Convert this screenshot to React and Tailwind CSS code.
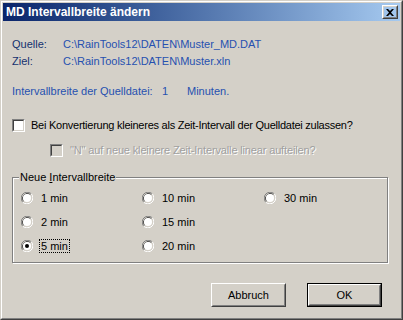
import React from "react";

function Checkbox({ disabled }) {
  return (
    <div className="w-[13px] h-[13px] shrink-0 border border-t-[#808080] border-l-[#808080] border-r-white border-b-white">
      <div className={"w-full h-full border border-t-[#404040] border-l-[#404040] border-r-[#d4d0c8] border-b-[#d4d0c8] " + (disabled ? "bg-[#d4d0c8]" : "bg-white")} />
    </div>
  );
}

function Radio({ checked }) {
  return (
    <svg width="12" height="12" viewBox="0 0 12 12" className="shrink-0">
      <path d="M10.24 1.76 A6 6 0 0 0 1.76 10.24" fill="none" stroke="#808080" strokeWidth="1" />
      <path d="M1.76 10.24 A6 6 0 0 0 10.24 1.76" fill="none" stroke="#ffffff" strokeWidth="1" />
      <path d="M9.5 2.5 A5 5 0 0 0 2.5 9.5" fill="none" stroke="#404040" strokeWidth="1" />
      <path d="M2.5 9.5 A5 5 0 0 0 9.5 2.5" fill="none" stroke="#d4d0c8" strokeWidth="1" />
      <circle cx="6" cy="6" r="4" fill="#ffffff" />
      {checked && <circle cx="6" cy="6" r="2" fill="#000000" />}
    </svg>
  );
}

function RadioItem({ label, checked, focus }) {
  return (
    <div className="h-[16px] flex items-center gap-[6px]">
      <Radio checked={checked} />
      {focus ? (
        <span className="border border-dotted border-black px-px leading-[12px]">{label}</span>
      ) : (
        <span className="leading-[13px] pl-[2px]">{label}</span>
      )}
    </div>
  );
}

function Button({ children, isDefault }) {
  const inner = (
    <div className="w-full h-full border border-t-white border-l-white border-r-[#404040] border-b-[#404040]">
      <div className="w-full h-full border border-t-[#d4d0c8] border-l-[#d4d0c8] border-r-[#808080] border-b-[#808080] flex items-center justify-center">
        {children}
      </div>
    </div>
  );
  return (
    <div className={"w-[75px] h-[24px] " + (isDefault ? "border border-black" : "")}>{inner}</div>
  );
}

export default function App() {
  return (
    <div
      className="w-[403px] h-[320px] bg-[#d4d0c8] border border-t-[#d4d0c8] border-l-[#d4d0c8] border-r-[#404040] border-b-[#404040] text-[11px] text-black"
      style={{ fontFamily: '"Liberation Sans", Arial, sans-serif' }}
    >
      <div className="h-full border border-t-white border-l-white border-r-[#808080] border-b-[#808080] p-px flex flex-col">
        {/* Title bar */}
        <div className="h-[18px] flex items-center justify-between bg-gradient-to-r from-[#0a246a] to-[#a6caf0] pl-[3px] pr-[2px]">
          <span className="text-white font-bold text-[12px] leading-none">MD Intervallbreite ändern</span>
          <div className="w-[16px] h-[14px] border border-t-white border-l-white border-r-[#404040] border-b-[#404040]">
            <div className="w-full h-full border border-t-[#d4d0c8] border-l-[#d4d0c8] border-r-[#808080] border-b-[#808080] flex items-center justify-center">
              <svg width="8" height="7" viewBox="0 0 8 7">
                <path d="M0 0h2l2 2 2-2h2L5 3.5 8 7H6L4 5 2 7H0l3-3.5z" fill="#000" />
              </svg>
            </div>
          </div>
        </div>

        {/* Body */}
        <div className="flex flex-col pl-[9px]">
          <div className="mt-[17px] h-[13px] flex items-center leading-[13px]">
            <span className="w-[51px] text-[#15306f]">Quelle:</span>
            <span className="text-[#2650b0]">C:\RainTools12\DATEN\Muster_MD.DAT</span>
          </div>
          <div className="mt-[4px] h-[13px] flex items-center leading-[13px]">
            <span className="w-[51px] text-[#15306f]">Ziel:</span>
            <span className="text-[#2650b0]">C:\RainTools12\DATEN\Muster.xln</span>
          </div>
          <div className="mt-[17px] h-[13px] flex items-center leading-[13px] text-[#2650b0]">
            <span className="w-[150px]">Intervallbreite der Quelldatei:</span>
            <span className="w-[25px]">1</span>
            <span>Minuten.</span>
          </div>

          <div className="mt-[21px] h-[13px] flex items-center gap-[6px]">
            <Checkbox />
            <span className="leading-[13px] tracking-[-0.25px]">Bei Konvertierung kleineres als Zeit-Intervall der Quelldatei zulassen?</span>
          </div>
          <div className="mt-[12px] h-[13px] flex items-center gap-[7px] pl-[38px]">
            <Checkbox disabled />
            <span className="leading-[13px] tracking-[-0.15px] text-[#a0a0a0] [text-shadow:1px_1px_0_#ffffff]">"N" auf neue kleinere Zeit-Intervalle linear aufteilen?</span>
          </div>

          {/* Group box */}
          <div className="relative mt-[20px] w-[376px] h-[86px] border border-[#808080] shadow-[inset_1px_1px_0_#ffffff,1px_1px_0_#ffffff]">
            <span className="absolute -top-[7px] left-[6px] px-px bg-[#d4d0c8] leading-[13px]">
              Neue <span className="underline">I</span>ntervallbreite
            </span>
            <div className="pt-[12px] pl-[8px] grid grid-cols-[121px_122px_auto] grid-rows-[16px_16px_16px] gap-y-[8px] grid-flow-col">
              <RadioItem label="1 min" />
              <RadioItem label="2 min" />
              <RadioItem label="5 min" checked focus />
              <RadioItem label="10 min" />
              <RadioItem label="15 min" />
              <RadioItem label="20 min" />
              <RadioItem label="30 min" />
            </div>
          </div>

          {/* Buttons */}
          <div className="mt-[20px] flex justify-end gap-[21px] pr-[18px]">
            <Button>Abbruch</Button>
            <Button isDefault>OK</Button>
          </div>
        </div>
      </div>
    </div>
  );
}
